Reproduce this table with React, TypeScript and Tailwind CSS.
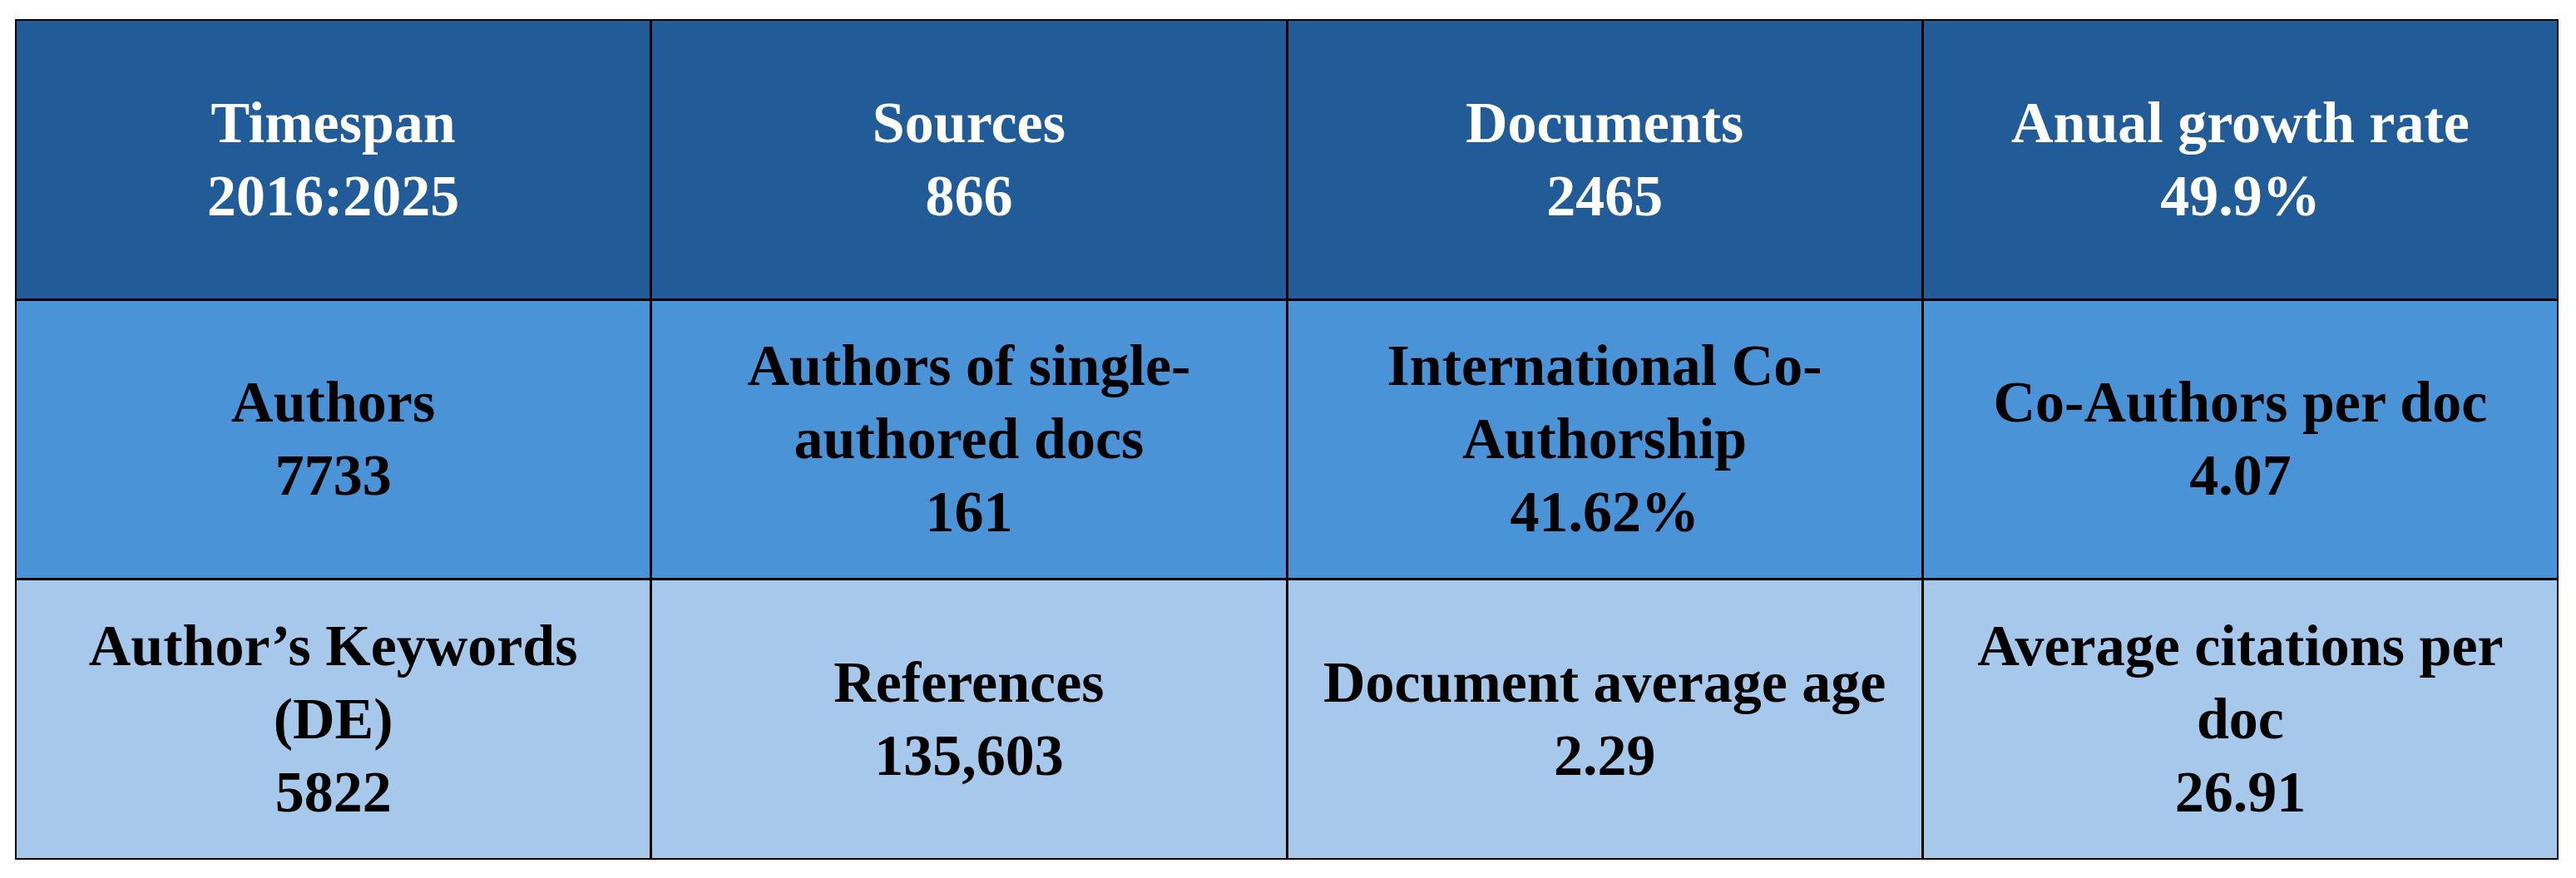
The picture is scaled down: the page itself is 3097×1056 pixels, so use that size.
const rows = [
  {
    bg: "bg-[#215c98]",
    text: "text-white",
    cells: [
      ["Timespan", "2016:2025"],
      ["Sources", "866"],
      ["Documents", "2465"],
      ["Anual growth rate", "49.9%"],
    ],
  },
  {
    bg: "bg-[#4a93d6]",
    text: "text-black",
    cells: [
      ["Authors", "7733"],
      ["Authors of single-", "authored docs", "161"],
      ["International Co-", "Authorship", "41.62%"],
      ["Co-Authors per doc", "4.07"],
    ],
  },
  {
    bg: "bg-[#a6c8ea]",
    text: "text-black",
    cells: [
      ["Author\u2019s Keywords", "(DE)", "5822"],
      ["References", "135,603"],
      ["Document average age", "2.29"],
      ["Average citations per", "doc", "26.91"],
    ],
  },
];

export default function App() {
  return (
    <div className="min-h-screen w-full bg-white pl-[18px] pt-[23px]">
      <div
        className="grid h-[1011px] w-[3058px] grid-cols-4 grid-rows-3 gap-[3px] border-2 border-black bg-black"
        style={{ fontFamily: '"Liberation Serif", "Times New Roman", serif' }}
      >
        {rows.map((row, r) =>
          row.cells.map((lines, c) => (
            <div
              key={`${r}-${c}`}
              className={`flex flex-col items-center justify-center text-center text-[70px] font-bold leading-[88px] ${row.bg} ${row.text}`}
            >
              {lines.map((l, i) => (
                <span key={i}>{l}</span>
              ))}
            </div>
          ))
        )}
      </div>
    </div>
  );
}
